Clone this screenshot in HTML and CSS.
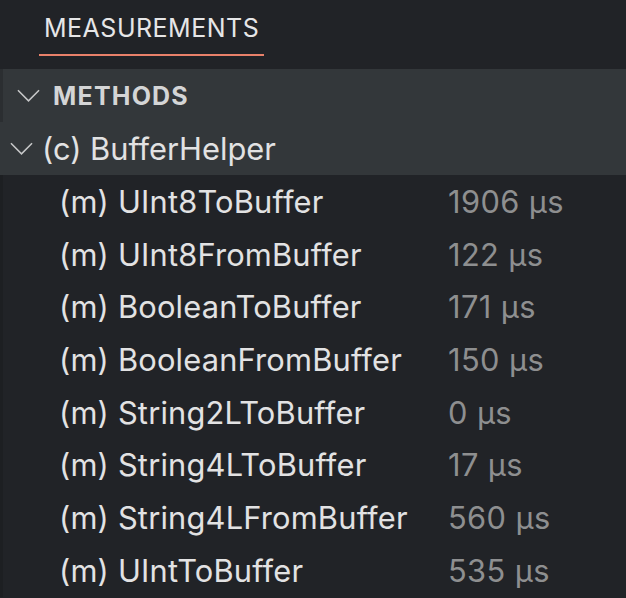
FILE: index.html
```html
<!DOCTYPE html>
<html>
<head>
<meta charset="utf-8">
<link rel="stylesheet" href="styles.css">
</head>
<body>
<div class="panel">
  <div class="tabs">
    <div class="tab active">MEASUREMENTS</div>
  </div>
  <div class="view">
    <div class="section-header">
      <svg class="chev chev-lg" viewBox="0 0 24 14"><path d="M1 1 L12 12 L23 1" /></svg>
      <span class="section-title">METHODS</span>
    </div>
    <div class="tree">
      <div class="row class-row">
        <svg class="chev chev-md" viewBox="0 0 24 14"><path d="M1 1 L12 12 L23 1" /></svg>
        <span class="label">(c) BufferHelper</span>
      </div>
      <div class="children">
        <div class="row leaf"><span class="label">(m) UInt8ToBuffer</span><span class="value">1906 µs</span></div>
        <div class="row leaf"><span class="label">(m) UInt8FromBuffer</span><span class="value">122 µs</span></div>
        <div class="row leaf"><span class="label">(m) BooleanToBuffer</span><span class="value">171 µs</span></div>
        <div class="row leaf"><span class="label">(m) BooleanFromBuffer</span><span class="value">150 µs</span></div>
        <div class="row leaf"><span class="label">(m) String2LToBuffer</span><span class="value">0 µs</span></div>
        <div class="row leaf"><span class="label">(m) String4LToBuffer</span><span class="value">17 µs</span></div>
        <div class="row leaf"><span class="label">(m) String4LFromBuffer</span><span class="value">560 µs</span></div>
        <div class="row leaf"><span class="label">(m) UIntToBuffer</span><span class="value">535 µs</span></div>
      </div>
    </div>
  </div>
</div>
</body>
</html>
```

FILE: styles.css
```css
html, body {
  margin: 0;
  padding: 0;
  background: #212327;
  font-family: Inter, "Noto Sans", sans-serif;
  color: #e2e2e3;
  overflow: hidden;
}
.panel {
  width: 626px;
  height: 598px;
  display: flex;
  flex-direction: column;
}
.tabs {
  height: 69px;
  background: #212327;
  display: flex;
  padding-left: 39px;
  box-sizing: border-box;
}
.tab {
  height: 56px;
  box-sizing: border-box;
  padding: 0 5px 0 5px;
  display: flex;
  align-items: center;
  padding-top: 2px;
  font-size: 25px;
  letter-spacing: 0.5px;
  color: #e6e6e7;
}
.tab.active {
  border-bottom: 2px solid #e8816a;
}
.view {
  flex: 1;
  display: flex;
  flex-direction: column;
}
.section-header {
  height: 53px;
  background: #33373a;
  display: flex;
  align-items: center;
  border-left: 3px solid #2b2e31;
  padding-left: 14px;
}
.section-title {
  font-weight: 700;
  font-size: 25px;
  letter-spacing: 1.2px;
  color: #d4d5d6;
  margin-left: 13px;
  padding-top: 1px;
}
.chev {
  fill: none;
  stroke: #c6c7c8;
  stroke-width: 1.6;
}
.chev-lg { width: 23px; height: 14px; }
.chev-md { width: 23px; height: 14px; }
.tree {
  display: flex;
  flex-direction: column;
}
.class-row {
  height: 53px;
  background: #33373a;
  padding-left: 10px;
}
.class-row .label {
  margin-left: 9px;
}
.children {
  border-left: 3px solid #1d1f22;
}
.row {
  display: flex;
  align-items: center;
  font-size: 30.8px;
}
.leaf {
  height: 52.7px;
  padding-left: 56px;
}
.leaf .label {
  width: 389px;
  flex: none;
  letter-spacing: 0.2px;
}
.value {
  color: #8e8f90;
  letter-spacing: 0.4px;
}
```
